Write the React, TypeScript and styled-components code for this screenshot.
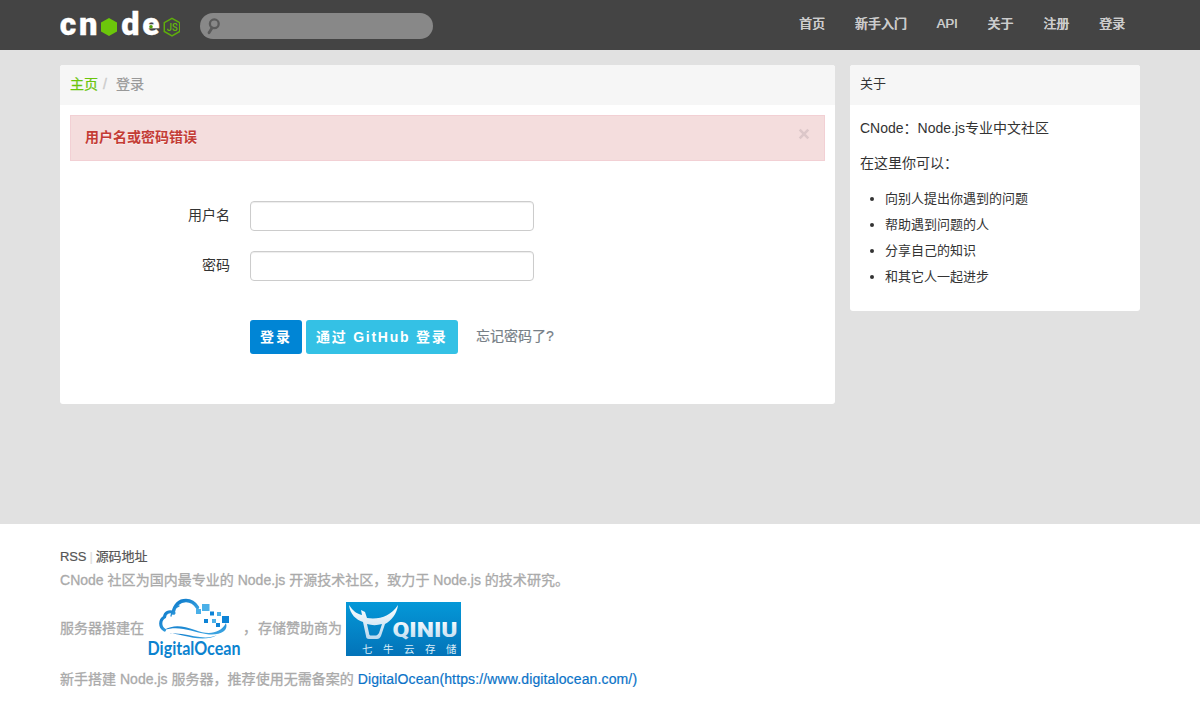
import React from 'react';
import styled, { createGlobalStyle } from 'styled-components';

const GlobalStyle = createGlobalStyle`
  * { box-sizing: border-box; }
  body {
    margin: 0;
    background: #e1e1e1;
    color: #333;
    font: 14px/20px "Liberation Sans", "Noto Sans CJK SC", sans-serif;
  }
  a { text-decoration: none; color: inherit; }
  p { margin: 0; }
`;

const Page = styled.div`
  display: flex;
  flex-direction: column;
  height: 719px;
  overflow: hidden;
`;

const Container = styled.div`
  width: 1080px;
  margin: 0 auto;
`;

const Navbar = styled.header`
  height: 50px;
  flex: none;
  background: #444;
`;

const NavInner = styled(Container)`
  display: flex;
  height: 50px;
  align-items: flex-start;
`;

const Brand = styled.a`
  display: block;
  width: 120px;
  height: 50px;
  margin-right: 20px;
`;

const SearchForm = styled.form`
  display: flex;
  align-items: center;
  width: 233px;
  height: 26px;
  margin-top: 13px;
  padding-left: 7px;
  border-radius: 15px;
  background: #888;
`;

const SearchInput = styled.input`
  flex: 1;
  min-width: 0;
  border: 0;
  outline: 0;
  background: transparent;
`;

const Menu = styled.nav`
  display: flex;
  margin-left: auto;
  font-size: 13px;
`;

const MenuLink = styled.a`
  padding: 14px 15px 16px 14.8px;
  color: #ccc;
  font-weight: 500;
  text-shadow: 0.4px 0 0 #ccc;
`;

const Main = styled(Container)`
  display: flex;
  align-items: flex-start;
  gap: 15px;
  flex: none;
  height: 474px;
  padding-top: 15px;
`;

const Panel = styled.section<{ $width: number; $height: number }>`
  width: ${(p) => p.$width}px;
  height: ${(p) => p.$height}px;
  border-radius: 3px;
  overflow: hidden;
  background: #fff;
`;

const PanelHeader = styled.div<{ $size: number }>`
  display: flex;
  height: 40px;
  padding: 9px 10px;
  background: #f6f6f6;
  font-size: ${(p) => p.$size}px;
`;

const HomeLink = styled.a`
  color: #6ac50a;
  -webkit-text-stroke: 0.25px currentColor;
`;

const Divider = styled.span`
  padding: 0 5px;
  color: #ccc;
  -webkit-text-stroke: 0.4px currentColor;
`;

const Current = styled.span`
  padding-left: 4px;
  color: #999;
  -webkit-text-stroke: 0.25px currentColor;
`;

const Alert = styled.div`
  display: flex;
  justify-content: space-between;
  height: 46px;
  margin: 10px 10px 0;
  padding: 11px 13px 12px 14px;
  border: 1px solid #f2d0d4;
  background: #f4dddd;
  color: #c43c35;
  font-weight: 700;
  text-shadow: 0 1px 0 rgba(255, 255, 255, 0.5);
`;

const CloseButton = styled.button`
  display: block;
  width: 14px;
  height: 14px;
  padding: 0;
  border: 0;
  background: transparent;
  color: #dcc7c9;
`;

const Form = styled.form`
  padding-top: 40px;
`;

const Field = styled.div`
  display: flex;
  height: 30px;
  margin-bottom: 20px;
`;

const Label = styled.label`
  width: 170px;
  margin-right: 20px;
  padding-top: 4px;
  text-align: right;
`;

const Input = styled.input`
  width: 284px;
  height: 30px;
  border: 1px solid #ccc;
  border-radius: 4px;
  outline: 0;
  background: #fff;
  box-shadow: inset 0 1px 1px rgba(0, 0, 0, 0.075);
`;

const Actions = styled.div`
  display: flex;
  gap: 4px;
  padding: 19px 0 0 190px;
`;

const Button = styled.button<{ $color: string; $width: number; $spacing?: number }>`
  width: ${(p) => p.$width}px;
  height: 34px;
  padding: 0 0 0 10px;
  border: 0;
  border-radius: 3px;
  background: ${(p) => p.$color};
  color: #fff;
  font: 700 14px/34px "Liberation Sans", "Noto Sans CJK SC", sans-serif;
  letter-spacing: ${(p) => p.$spacing ?? 2}px;
  text-align: left;
  white-space: nowrap;
`;

const ForgotLink = styled.a`
  margin-left: 14px;
  padding-top: 6px;
  color: #778087;
  -webkit-text-stroke: 0.2px currentColor;
`;

const About = styled.div`
  padding: 13px 10px;
`;

const Paragraph = styled.p`
  margin-bottom: 16px;
  &:nth-child(2) { margin-top: -1px; margin-bottom: 18px; }
`;

const List = styled.ul`
  margin: -5px 0 0;
  padding-left: 25px;
  font-size: 13px;
  line-height: 26px;
`;

const Footer = styled.footer`
  flex: 1;
  background: #fff;
  color: #aaa;
`;

const FooterInner = styled(Container)`
  padding-top: 23px;
`;

const FooterLinks = styled.div`
  display: flex;
  color: #555;
  font-size: 13px;
  letter-spacing: -0.1px;
  -webkit-text-stroke: 0.2px currentColor;
`;

const Bar = styled.span`
  padding: 0 3px;
  color: #ddd;
`;

const FooterText = styled.p`
  margin-top: 3px;
  white-space: nowrap;
  letter-spacing: 0.02px;
  -webkit-text-stroke: 0.3px currentColor;
`;

const Sponsors = styled.div`
  display: flex;
  align-items: center;
  height: 60px;
  margin: 8px 0 11px;
  -webkit-text-stroke: 0.3px currentColor;
  svg {
    flex: none;
    margin-top: 2px;
    overflow: visible;
    -webkit-text-stroke: 0;
  }
`;

const Caption = styled.span<{ $width: number }>`
  width: ${(p) => p.$width}px;
  white-space: nowrap;
`;

const Comma = styled.span`
  width: 17px;
  padding-left: 2px;
`;

const BlueLink = styled.a`
  color: #0b73c8;
  letter-spacing: 0.13px;
  -webkit-text-stroke: 0.2px currentColor;
`;

const CnodeLogo = () => (
  <svg width="120" height="50" viewBox="0 0 120 50" fontFamily="Roboto" fontWeight="900" fontSize="32" fill="#fff">
    <g stroke="#fff" strokeWidth="0.3">
      <text x="-0.3" y="35.3" textLength="16.5" lengthAdjust="spacingAndGlyphs">c</text>
      <text x="19" y="35.3" textLength="18.5" lengthAdjust="spacingAndGlyphs">n</text>
      <text x="61.3" y="35.3" textLength="18.3" lengthAdjust="spacingAndGlyphs">d</text>
      <text x="82.3" y="35.3" textLength="17.3" lengthAdjust="spacingAndGlyphs">e</text>
    </g>
    <path d="M49 18l8 4.5v9L49 36l-8-4.500v-9z" fill="#6cc70b" />
    <circle cx="91" cy="26.8" r="1.8" fill="#53a009" />
    <path d="M112 18.3l7.7 4.4v8.8l-7.7 4.3-7.7-4.3v-8.8z" fill="none" stroke="#5fae0c" strokeWidth="1.5" />
    <text x="106.7" y="31" fontSize="11" fontWeight="500" fill="#65b80d" textLength="11" lengthAdjust="spacingAndGlyphs">JS</text>
  </svg>
);

const SearchIcon = () => (
  <svg width="14" height="18" viewBox="0 0 14 18" fill="none" stroke="#5a5a5a">
    <circle cx="7.3" cy="6.8" r="4.4" strokeWidth="2.3" />
    <path d="M5 11L2 15.8" strokeWidth="2.8" strokeLinecap="round" />
  </svg>
);

const DigitalOceanLogo = () => (
  <svg width="94" height="60" viewBox="0 0 94 60">
    <defs>
      <linearGradient id="cloud" x1="0" y1="0" x2="1" y2="1">
        <stop offset="0" stopColor="#0b78c9" />
        <stop offset="1" stopColor="#40a9e4" />
      </linearGradient>
    </defs>
    <g fill="none" stroke="url(#cloud)" strokeLinecap="round">
      <path d="M26 14C28 5 33 1.500 39 1.500c5 0 9 3 11.500 7" strokeWidth="3.4" />
      <path d="M27 14c-5-3-9 0-9.500 4-5 3-5 10 0 13" strokeWidth="3.2" />
      <path d="M24 17c1-5 4-9 8-10" strokeWidth="1.300" />
    </g>
    <g fill="url(#cloud)">
      <path d="M17 31C27 25 36 27 48 31c13 5 25 4 31-7 3 9-8 13-20 11-14-2-26-9-42-4z" />
      <path d="M22 35c11-2 21 2 31 3 7 1 13 0 17-2-9 6-24 3-32 1-6-1-10-3-16-2z" />
    </g>
    <g fill="#4bb0e8">
      <path d="M49 10h5v5h-5zM55 5h7.500v7H55zM70 13h4v4h-4zM65 20h4v4h-4z" />
      <path d="M63 12.500h4v4h-4zM57 20h4v4h-4zM69 24h4v4h-4zM75 17h7v7h-7z" fill="#0d83d6" />
    </g>
    <text x="0.500" y="56" textLength="93" lengthAdjust="spacingAndGlyphs" fontFamily="Lato" fontSize="18" fontWeight="700" fill="#0c83cf">DigitalOcean</text>
  </svg>
);

const QiniuLogo = () => (
  <svg width="115" height="54" viewBox="0 0 115 54">
    <defs>
      <linearGradient id="blue" x1="0" y1="0" x2="0" y2="1">
        <stop offset="0" stopColor="#0498d8" />
        <stop offset="1" stopColor="#0373b8" />
      </linearGradient>
      <linearGradient id="silver" x1="0" y1="0" x2="0" y2="1">
        <stop offset="0" stopColor="#fff" />
        <stop offset="1" stopColor="#b9d9ef" />
      </linearGradient>
    </defs>
    <path d="M0 0h115v54H0z" fill="url(#blue)" />
    <path d="M3 3c4 6 8 9 13 10l-1-5 4 2 2 6c12 2 24-2 31-13-1 9-7 16-13 19l-4 12c-1 2-2 3-4 3h-8c-2 0-3-1-3-3l-3-14C10 18 4 12 3 3zm18 19l2 9c0 2 1 2.500 2 2.500h5c1 0 2-1 3-2.500l3-9c-5 1.500-10 1.500-15 0z" fill="url(#silver)" fillRule="evenodd" />
    <text x="46.500" y="35" textLength="65" lengthAdjust="spacingAndGlyphs" fontFamily="Roboto" fontWeight="900" fontSize="21" fill="url(#silver)">QINIU</text>
    <text x="16" y="51" fontFamily="Noto Sans CJK SC" fontSize="10.500" fill="#d9edf8" letterSpacing="10.500">七牛云存储</text>
  </svg>
);

const menu = ['首页', '新手入门', 'API', '关于', '注册', '登录'];
const abilities = ['向别人提出你遇到的问题', '帮助遇到问题的人', '分享自己的知识', '和其它人一起进步'];

export default function App() {
  return (
    <Page>
      <GlobalStyle />
      <Navbar>
        <NavInner>
          <Brand href="#"><CnodeLogo /></Brand>
          <SearchForm>
            <SearchIcon />
            <SearchInput type="text" />
          </SearchForm>
          <Menu>{menu.map((m) => <MenuLink key={m} href="#">{m}</MenuLink>)}</Menu>
        </NavInner>
      </Navbar>
      <Main as="main">
        <Panel $width={775} $height={339}>
          <PanelHeader $size={14}>
            <HomeLink href="#">主页</HomeLink>
            <Divider>/</Divider>
            <Current>登录</Current>
          </PanelHeader>
          <Alert>
            <span>用户名或密码错误</span>
            <CloseButton type="button">
              <svg width="14" height="14" viewBox="0 0 14 14" stroke="currentColor" strokeWidth="2.6">
                <path d="M2.700 2.700l8.600 8.600M11.300 2.700l-8.600 8.600" />
              </svg>
            </CloseButton>
          </Alert>
          <Form>
            <Field><Label>用户名</Label><Input type="text" /></Field>
            <Field><Label>密码</Label><Input type="password" /></Field>
            <Actions>
              <Button type="button" $color="#0085d5" $width={52}>登录</Button>
              <Button type="button" $color="#34c1e5" $width={152} $spacing={1.75}>通过 GitHub 登录</Button>
              <ForgotLink href="#">忘记密码了?</ForgotLink>
            </Actions>
          </Form>
        </Panel>
        <Panel as="aside" $width={290} $height={246}>
          <PanelHeader $size={13}>关于</PanelHeader>
          <About>
            <Paragraph>CNode：Node.js专业中文社区</Paragraph>
            <Paragraph>在这里你可以：</Paragraph>
            <List>{abilities.map((a) => <li key={a}>{a}</li>)}</List>
          </About>
        </Panel>
      </Main>
      <Footer>
        <FooterInner>
          <FooterLinks><a href="#">RSS</a><Bar>|</Bar><a href="#">源码地址</a></FooterLinks>
          <FooterText>CNode 社区为国内最专业的 Node.js 开源技术社区，致力于 Node.js 的技术研究。</FooterText>
          <Sponsors>
            <Caption $width={87}>服务器搭建在</Caption>
            <DigitalOceanLogo />
            <Comma>，</Comma>
            <Caption $width={88}>存储赞助商为</Caption>
            <QiniuLogo />
          </Sponsors>
          <FooterText>
            新手搭建 Node.js 服务器，推荐使用无需备案的 <BlueLink href="#">DigitalOcean(https://www.digitalocean.com/)</BlueLink>
          </FooterText>
        </FooterInner>
      </Footer>
    </Page>
  );
}
